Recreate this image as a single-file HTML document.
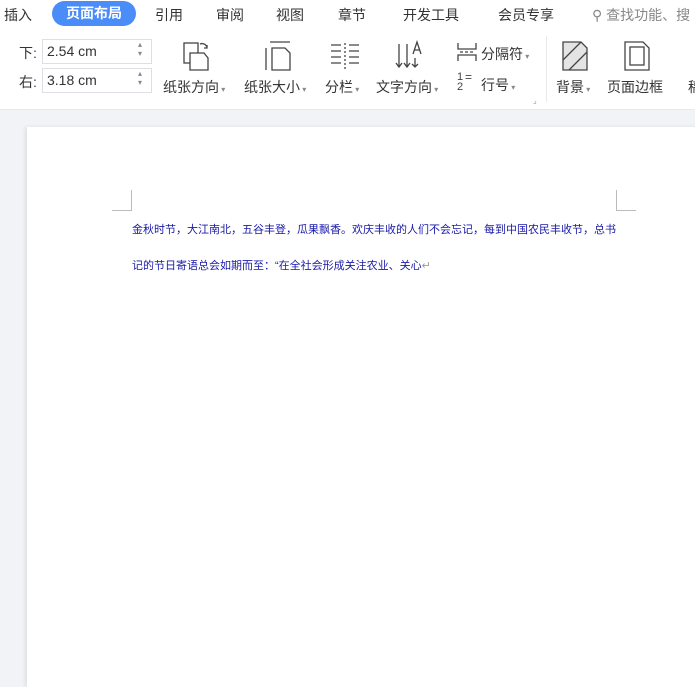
<!DOCTYPE html>
<html><head><meta charset="utf-8"><style>
*{margin:0;padding:0;box-sizing:border-box}
body{width:695px;height:667px;overflow:hidden;background:#f1f3f6;font-family:"Liberation Sans","Noto Sans CJK SC",sans-serif;color:#333;position:relative}
.a{position:absolute;white-space:nowrap}
.top{position:absolute;left:0;top:0;width:695px;height:110px;background:#fff;border-bottom:1px solid #e8eaed}
.tab{font-size:14px;top:5px}
.pill{left:52px;top:1px;width:84px;height:25px;border-radius:13px;background:#4b8df8;color:#fff;font-size:14px;font-weight:bold;text-align:center;line-height:25px}
.lbl{font-size:14px;color:#333}
.box{border:1px solid #dcdfe4;height:25px;background:#fff;font-size:14px;line-height:23px;padding-left:4px}
.dd{font-size:8px;color:#888}
.page{position:absolute;left:27px;top:127px;width:700px;height:560px;background:#fff;box-shadow:-2px 0 4px rgba(0,0,0,.08)}
.txt{font-size:11px;color:#1a1aa8}
</style></head><body>
<div class="top">
<div class="a tab" style="left:4px">插入</div>
<div class="a pill">页面布局</div>
<div class="a tab" style="left:155px">引用</div>
<div class="a tab" style="left:216px">审阅</div>
<div class="a tab" style="left:276px">视图</div>
<div class="a tab" style="left:338px">章节</div>
<div class="a tab" style="left:403px">开发工具</div>
<div class="a tab" style="left:498px">会员专享</div>
<div class="a tab" style="left:592px;color:#888">⚲ 查找功能、搜</div>

<div class="a box" style="left:-10px;top:39px;width:8px"></div>
<div class="a box" style="left:-10px;top:68px;width:8px"></div>
<div class="a lbl" style="left:19px;top:43px">下:</div>
<div class="a lbl" style="left:19px;top:72px">右:</div>
<div class="a box" style="left:42px;top:39px;width:110px">2.54 cm</div>
<div class="a box" style="left:42px;top:68px;width:110px">3.18 cm</div>
<div class="a dd" style="left:138px;top:40px">▴<br>▾</div>
<div class="a dd" style="left:138px;top:69px">▴<br>▾</div>

<svg class="a" style="left:180px;top:40px" width="36" height="32" fill="none" stroke="#444" stroke-width="1.3">
<rect x="4" y="3" width="14" height="20"/><path d="M10 13h14l4 5v12H10z" fill="#fff"/><path d="M20 4a5 5 0 0 1 7 4M27 5v3h-3"/></svg>
<div class="a lbl" style="left:163px;top:77px">纸张方向<span class="dd"> ▾</span></div>
<svg class="a" style="left:262px;top:40px" width="32" height="32" fill="none" stroke="#444" stroke-width="1.3">
<path d="M8 2h20M4 8v22"/><path d="M10 8h13l5 5v17H10z"/></svg>
<div class="a lbl" style="left:244px;top:77px">纸张大小<span class="dd"> ▾</span></div>
<svg class="a" style="left:330px;top:42px" width="30" height="28" stroke="#444" stroke-width="1.3">
<path d="M1 3h10M1 9h10M1 15h10M1 21h10M19 3h10M19 9h10M19 15h10M19 21h10"/><path d="M15 1v26" stroke-dasharray="2 2"/></svg>
<div class="a lbl" style="left:325px;top:77px">分栏<span class="dd"> ▾</span></div>
<svg class="a" style="left:395px;top:40px" width="32" height="32" fill="none" stroke="#444" stroke-width="1.3">
<path d="M4 4v22M1 23l3 4 3-4M12 4v22M9 23l3 4 3-4M20 18v9M17 24l3 3 3-3M18 14l4-12 4 12M19 10h6"/></svg>
<div class="a lbl" style="left:376px;top:77px">文字方向<span class="dd"> ▾</span></div>
<svg class="a" style="left:456px;top:42px" width="22" height="20" fill="none" stroke="#444" stroke-width="1.3">
<path d="M2 1v6h18V1M2 19v-6h18v6M4 10h3M9 10h3M14 10h3"/></svg>
<div class="a lbl" style="left:481px;top:44px">分隔符<span class="dd"> ▾</span></div>
<div class="a" style="left:457px;top:72px;font-size:11px;line-height:10px;color:#444">1<br>2</div>
<div class="a" style="left:465px;top:70px;font-size:12px;color:#444">=</div>
<div class="a lbl" style="left:481px;top:75px">行号<span class="dd"> ▾</span></div>
<div class="a" style="left:533px;top:96px;font-size:8px;color:#999">⌟</div>
<div class="a" style="left:546px;top:36px;width:1px;height:66px;background:#e6e8eb"></div>
<svg class="a" style="left:562px;top:41px" width="26" height="30" fill="#e4e4e4" stroke="#444" stroke-width="1.3">
<path d="M1 1h18l6 6v22H1z"/><path d="M1 19L19 1M7 29L25 11" fill="none"/></svg>
<div class="a lbl" style="left:556px;top:77px">背景<span class="dd"> ▾</span></div>
<svg class="a" style="left:624px;top:41px" width="26" height="30" fill="none" stroke="#444" stroke-width="1.3">
<path d="M1 1h18l6 6v22H1z"/><rect x="6" y="6" width="14" height="18"/></svg>
<div class="a lbl" style="left:607px;top:77px">页面边框</div>
<div class="a lbl" style="left:688px;top:77px">稿</div>
</div>
<div class="page"></div>
<div class="a" style="left:131px;top:190px;width:1px;height:20px;background:#bbb"></div>
<div class="a" style="left:112px;top:210px;width:20px;height:1px;background:#bbb"></div>
<div class="a" style="left:616px;top:190px;width:1px;height:20px;background:#bbb"></div>
<div class="a" style="left:616px;top:210px;width:20px;height:1px;background:#bbb"></div>
<div class="a txt" style="left:132px;top:221px">金秋时节，大江南北，五谷丰登，瓜果飘香。欢庆丰收的人们不会忘记，每到中国农民丰收节，总书</div>
<div class="a txt" style="left:132px;top:257px">记的节日寄语总会如期而至：“在全社会形成关注农业、关心<span style="color:#999">↵</span></div>
</body></html>
